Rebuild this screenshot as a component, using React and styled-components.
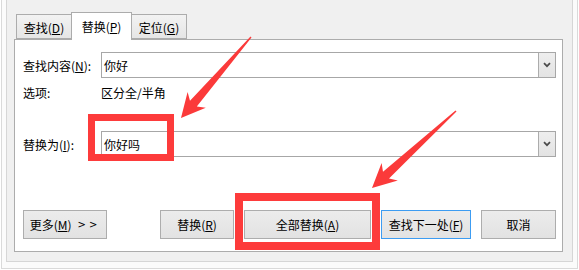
import React from "react";
import styled, { createGlobalStyle } from "styled-components";

const Global = createGlobalStyle`
  html, body { margin: 0; padding: 0; background: #ffffff; }
  body {
    font-family: "Noto Sans CJK SC", "Microsoft YaHei", "Noto Sans", sans-serif;
    font-size: 12px;
    color: #000;
  }
  * { box-sizing: border-box; }
`;

const Stage = styled.div`
  position: relative;
  width: 579px;
  height: 270px;
  overflow: hidden;
`;

const OuterFrame = styled.div`
  margin-left: 1px;
  width: 577px;
  height: 269px;
  border: 1px solid #dadada;
  border-top: none;
  background: #fbfbfb;
  padding: 0 4px 6px 4px;
  display: flex;
`;

const InnerFrame = styled.div`
  flex: 1;
  border: 1px solid #d6d6d6;
  border-top: none;
  background: #f0f0f0;
  padding: 12px 9px 9px 7px;
  display: flex;
  flex-direction: column;
`;

const TabStrip = styled.div`
  display: flex;
  align-items: flex-end;
  height: 28px;
  padding-left: 2px;
  margin-bottom: -1px;
  position: relative;
  z-index: 1;
`;

const Tab = styled.div`
  width: ${(p) => p.$w}px;
  height: ${(p) => (p.$active ? 28 : 25)}px;
  margin-bottom: ${(p) => (p.$active ? 0 : 1)}px;
  margin-left: ${(p) => (p.$first ? 0 : -1)}px;
  border: 1px solid #acacac;
  border-bottom: ${(p) => (p.$active ? "none" : "1px solid #acacac")};
  background: ${(p) =>
    p.$active ? "#ffffff" : "linear-gradient(#f2f2f2, #e6e6e6)"};
  position: relative;
  z-index: ${(p) => (p.$active ? 2 : 1)};
  display: flex;
  align-items: center;
  justify-content: center;
  padding-top: ${(p) => (p.$active ? 0 : 1)}px;
  line-height: 17px;
  white-space: nowrap;
`;

const Panel = styled.div`
  flex: 1;
  border: 1px solid #acacac;
  background: #ffffff;
  padding: 12px 6px 12px 8px;
  display: flex;
  flex-direction: column;
`;

const FieldRow = styled.div`
  display: grid;
  grid-template-columns: 78px 1fr;
  align-items: center;
  margin-top: ${(p) => p.$mt || 0}px;
  height: ${(p) => p.$h}px;
  line-height: 17px;
  white-space: nowrap;
`;

const Label = styled.span`
  white-space: nowrap;
`;

const Combo = styled.div`
  display: flex;
  height: 26px;
  border: 1px solid #a7a7a7;
  background: #fff;
`;

const ComboText = styled.div`
  flex: 1;
  padding-left: 2px;
  display: flex;
  align-items: center;
  line-height: 17px;
`;

const DropButton = styled.div`
  width: 17px;
  border-left: 1px solid #acacac;
  background: linear-gradient(#eeeeee, #e3e3e3);
  display: flex;
  align-items: center;
  justify-content: center;
`;

const ButtonRow = styled.div`
  margin-top: 53px;
  height: 29px;
  display: flex;
  justify-content: space-between;
`;

const ButtonGroup = styled.div`
  display: flex;
  gap: 10px;
`;

const Button = styled.div`
  width: ${(p) => p.$w}px;
  height: 29px;
  border: 1px solid ${(p) => (p.$focus ? "#3c9cf2" : "#adadad")};
  background: linear-gradient(#ececec, #e2e2e2);
  display: flex;
  align-items: center;
  justify-content: center;
  line-height: 17px;
  white-space: nowrap;
`;

const Chevrons = styled.span`
  margin-left: 6px;
  letter-spacing: 3px;
  font-family: "DejaVu Sans", sans-serif;
  font-size: 10px;
`;

const RedMark = styled.div`
  position: absolute;
  left: ${(p) => p.$x}px;
  top: ${(p) => p.$y}px;
  width: ${(p) => p.$w}px;
  height: ${(p) => p.$h}px;
  border: ${(p) => p.$t}px solid #fd3b3b;
  pointer-events: none;
`;

const Overlay = styled.svg`
  position: absolute;
  left: 0;
  top: 0;
  pointer-events: none;
`;

function arrowPoints(tail, tip, o = {}) {
  const { headLen = 24, headHalf = 12, neckLen = 19, neckHalf = 4.5, tailHalf = 0.7 } = o;
  const dx = tip[0] - tail[0];
  const dy = tip[1] - tail[1];
  const len = Math.hypot(dx, dy);
  const ux = dx / len;
  const uy = dy / len;
  const nx = -uy;
  const ny = ux;
  const J = [tip[0] - ux * neckLen, tip[1] - uy * neckLen];
  const W = [tip[0] - ux * headLen, tip[1] - uy * headLen];
  const pts = [
    [tail[0] + nx * tailHalf, tail[1] + ny * tailHalf],
    [J[0] + nx * neckHalf, J[1] + ny * neckHalf],
    [W[0] + nx * headHalf, W[1] + ny * headHalf],
    tip,
    [W[0] - nx * headHalf, W[1] - ny * headHalf],
    [J[0] - nx * neckHalf, J[1] - ny * neckHalf],
    [tail[0] - nx * tailHalf, tail[1] - ny * tailHalf],
  ];
  return pts.map((p) => `${p[0].toFixed(1)},${p[1].toFixed(1)}`).join(" ");
}

const Chevron = () => (
  <svg width="8" height="6" viewBox="0 0 8 6">
    <polyline points="1,1.2 4,4.2 7,1.2" fill="none" stroke="#4a4a4a" strokeWidth="1.7" />
  </svg>
);

export default function App() {
  return (
    <>
      <Global />
      <Stage>
        <OuterFrame>
          <InnerFrame>
            <TabStrip>
              <Tab $w={56} $first>
                查找(<u>D</u>)
              </Tab>
              <Tab $w={61} $active>
                替换(<u>P</u>)
              </Tab>
              <Tab $w={56}>
                定位(<u>G</u>)
              </Tab>
            </TabStrip>
            <Panel>
              <FieldRow $h={26}>
                <Label>
                  查找内容(<u>N</u>):
                </Label>
                <Combo>
                  <ComboText>你好</ComboText>
                  <DropButton>
                    <Chevron />
                  </DropButton>
                </Combo>
              </FieldRow>
              <FieldRow $h={17} $mt={6}>
                <Label>选项:</Label>
                <span>区分全/半角</span>
              </FieldRow>
              <FieldRow $h={26} $mt={30}>
                <Label>
                  替换为(<u>I</u>):
                </Label>
                <Combo>
                  <ComboText>你好吗</ComboText>
                  <DropButton>
                    <Chevron />
                  </DropButton>
                </Combo>
              </FieldRow>
              <ButtonRow>
                <Button $w={84}>
                  更多(<u>M</u>)<Chevrons>&gt;&gt;</Chevrons>
                </Button>
                <ButtonGroup>
                  <Button $w={74}>
                    替换(<u>R</u>)
                  </Button>
                  <Button $w={127}>
                    全部替换(<u>A</u>)
                  </Button>
                  <Button $w={90} $focus>
                    查找下一处(<u>F</u>)
                  </Button>
                  <Button $w={75}>取消</Button>
                </ButtonGroup>
              </ButtonRow>
            </Panel>
          </InnerFrame>
        </OuterFrame>

        <RedMark $x={88} $y={114} $w={86} $h={47} $t={7} />
        <RedMark $x={235} $y={193} $w={145} $h={57} $t={8} />

        <Overlay width="579" height="270" viewBox="0 0 579 270">
          <polygon points={arrowPoints([251, 37], [181, 118])} fill="#fb3a3a" />
          <polygon points={arrowPoints([456, 111], [372, 188])} fill="#fb3a3a" />
        </Overlay>
      </Stage>
    </>
  );
}
